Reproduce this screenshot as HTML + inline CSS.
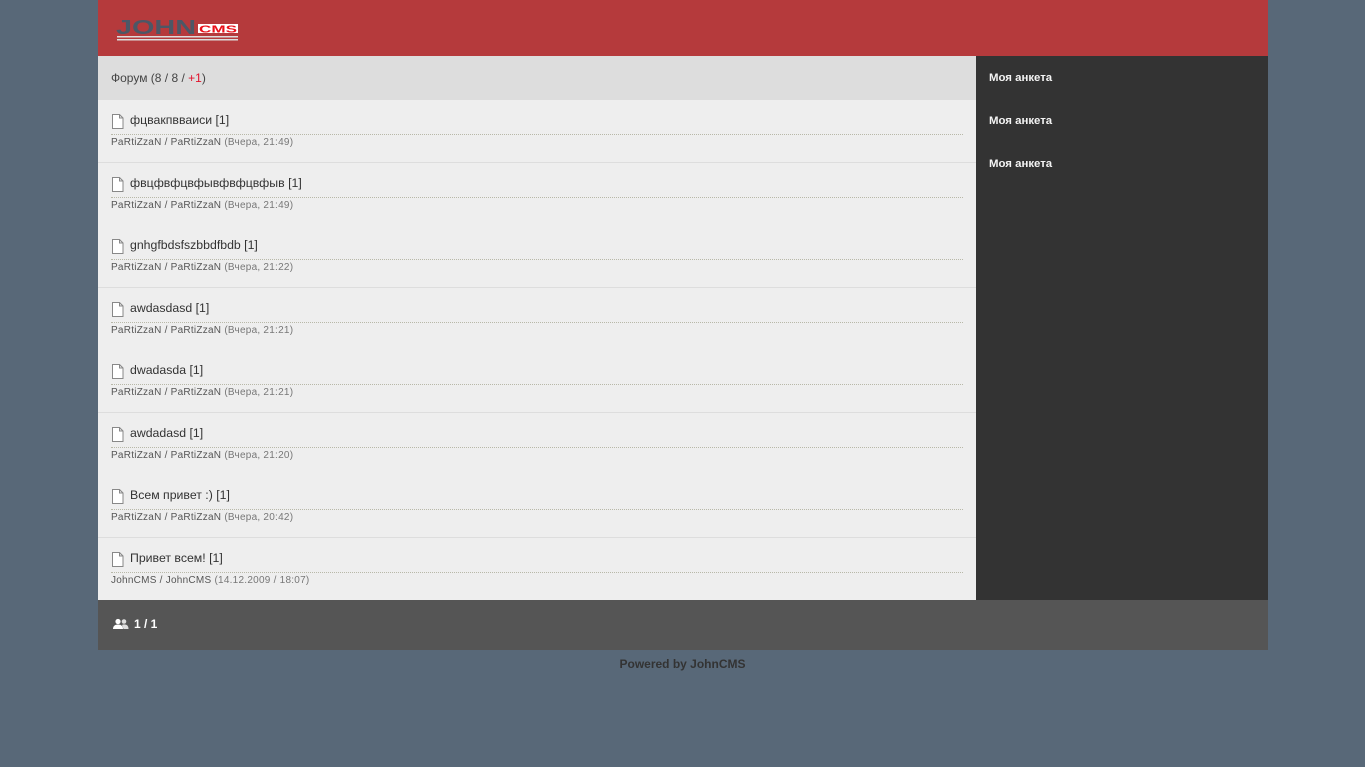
<!DOCTYPE html>
<html><head><meta charset="utf-8"><style>
*{margin:0;padding:0;box-sizing:border-box}
body{width:1365px;height:767px;background:#586878;font-family:"Liberation Sans","Noto Sans CJK SC",sans-serif;position:relative;overflow:hidden}
.hdr{position:absolute;left:98px;top:0;width:1170px;height:56px;background:#b53a3c}
.main{position:absolute;left:98px;top:56px;width:878px;height:544px;background:#eeeeee}
.side{position:absolute;left:976px;top:56px;width:292px;height:544px;background:#333}
.side a{position:absolute;left:13px;color:#f4f4f4;font-size:11.4px;font-weight:bold;text-decoration:none}
.fh{position:absolute;left:0;top:0;width:878px;height:44px;background:#dddddd;font-size:12px;color:#444;padding:15px 13px}
.it{position:absolute;left:13px;width:852px}
.t{font-size:12.3px;color:#333;padding-left:19px;position:relative;height:15px;line-height:15px}
.t svg{position:absolute;left:0;top:1px}
.dl{border-top:1px dotted #b8b8a8;margin-top:6px}
.m{font-size:10px;color:#555;margin-top:2px;letter-spacing:.25px}
.m span{color:#777}
.sep{position:absolute;left:0;width:878px;height:1px;background:#ddd}
.ft{position:absolute;left:98px;top:600px;width:1170px;height:50px;background:#555;color:#fff;font-size:12px;font-weight:bold;padding:17px 0 0 36px}
.pw{position:absolute;left:0;width:1365px;top:657px;text-align:center;font-size:12px;font-weight:bold;color:#333}
</style></head><body>
<div class="hdr">
<svg width="140" height="30" style="position:absolute;left:18px;top:16px" viewBox="0 0 140 30">
<text x="0" y="18" font-family="Liberation Sans" font-weight="bold" font-size="20" fill="#4c5766" textLength="80" lengthAdjust="spacingAndGlyphs">JOHN</text>
<rect x="82" y="8" width="40" height="9" fill="#fff"/>
<text x="83" y="16.5" font-family="Liberation Sans" font-weight="bold" font-size="10" fill="#e8101a" textLength="38" lengthAdjust="spacingAndGlyphs">CMS</text>
<rect x="1" y="20" width="121" height="1.5" fill="#ddd"/>
<rect x="1" y="23" width="121" height="1.5" fill="#ddd"/>
</svg>
</div>
<div class="main">
<div class="fh">Форум (8 / 8 / <span style="color:#e0102a">+1</span>)</div>
<div class="sep" style="top:106px"></div>
<div class="sep" style="top:231px"></div>
<div class="sep" style="top:356px"></div>
<div class="sep" style="top:481px"></div>
</div>
<div class="side">
<a style="top:16px">Моя анкета</a>
<a style="top:59px">Моя анкета</a>
<a style="top:102px">Моя анкета</a>
</div>
<div class="ft"><svg width="16" height="12" style="position:absolute;left:15px;top:18px" viewBox="0 0 16 12"><circle cx="5" cy="3.5" r="2.6" fill="#fff"/><path d="M0 11c0-3 2-4.5 5-4.5s5 1.5 5 4.5z" fill="#fff"/><circle cx="11" cy="3.5" r="2.3" fill="#ddd"/><path d="M9 7c1-.6 1.5-.6 2-.6 3 0 4.5 1.5 4.5 4.6h-5z" fill="#ddd"/></svg>1 / 1</div>
<div class="pw">Powered by JohnCMS</div>
<div style="position:absolute;left:98px;top:56px">
<div class="it" style="top:57px"><div class="t"><svg width="13" height="15"><path d="M1.5 .5h7l3.5 3.5v10.5h-10.5z M8.5 .5v3.5h3.5" fill="#fff" stroke="#888"/></svg>фцвакпвваиси [1]</div><div class="dl"></div><div class="m">PaRtiZzaN / PaRtiZzaN <span>(Вчера, 21:49)</span></div></div>
<div class="it" style="top:120px"><div class="t"><svg width="13" height="15"><path d="M1.5 .5h7l3.5 3.5v10.5h-10.5z M8.5 .5v3.5h3.5" fill="#fff" stroke="#888"/></svg>фвцфвфцвфывфвфцвфыв [1]</div><div class="dl"></div><div class="m">PaRtiZzaN / PaRtiZzaN <span>(Вчера, 21:49)</span></div></div>
<div class="it" style="top:182px"><div class="t"><svg width="13" height="15"><path d="M1.5 .5h7l3.5 3.5v10.5h-10.5z M8.5 .5v3.5h3.5" fill="#fff" stroke="#888"/></svg>gnhgfbdsfszbbdfbdb [1]</div><div class="dl"></div><div class="m">PaRtiZzaN / PaRtiZzaN <span>(Вчера, 21:22)</span></div></div>
<div class="it" style="top:245px"><div class="t"><svg width="13" height="15"><path d="M1.5 .5h7l3.5 3.5v10.5h-10.5z M8.5 .5v3.5h3.5" fill="#fff" stroke="#888"/></svg>awdasdasd [1]</div><div class="dl"></div><div class="m">PaRtiZzaN / PaRtiZzaN <span>(Вчера, 21:21)</span></div></div>
<div class="it" style="top:307px"><div class="t"><svg width="13" height="15"><path d="M1.5 .5h7l3.5 3.5v10.5h-10.5z M8.5 .5v3.5h3.5" fill="#fff" stroke="#888"/></svg>dwadasda [1]</div><div class="dl"></div><div class="m">PaRtiZzaN / PaRtiZzaN <span>(Вчера, 21:21)</span></div></div>
<div class="it" style="top:370px"><div class="t"><svg width="13" height="15"><path d="M1.5 .5h7l3.5 3.5v10.5h-10.5z M8.5 .5v3.5h3.5" fill="#fff" stroke="#888"/></svg>awdadasd [1]</div><div class="dl"></div><div class="m">PaRtiZzaN / PaRtiZzaN <span>(Вчера, 21:20)</span></div></div>
<div class="it" style="top:432px"><div class="t"><svg width="13" height="15"><path d="M1.5 .5h7l3.5 3.5v10.5h-10.5z M8.5 .5v3.5h3.5" fill="#fff" stroke="#888"/></svg>Всем привет :) [1]</div><div class="dl"></div><div class="m">PaRtiZzaN / PaRtiZzaN <span>(Вчера, 20:42)</span></div></div>
<div class="it" style="top:495px"><div class="t"><svg width="13" height="15"><path d="M1.5 .5h7l3.5 3.5v10.5h-10.5z M8.5 .5v3.5h3.5" fill="#fff" stroke="#888"/></svg>Привет всем! [1]</div><div class="dl"></div><div class="m">JohnCMS / JohnCMS <span>(14.12.2009 / 18:07)</span></div></div>
</div>
</body></html>
